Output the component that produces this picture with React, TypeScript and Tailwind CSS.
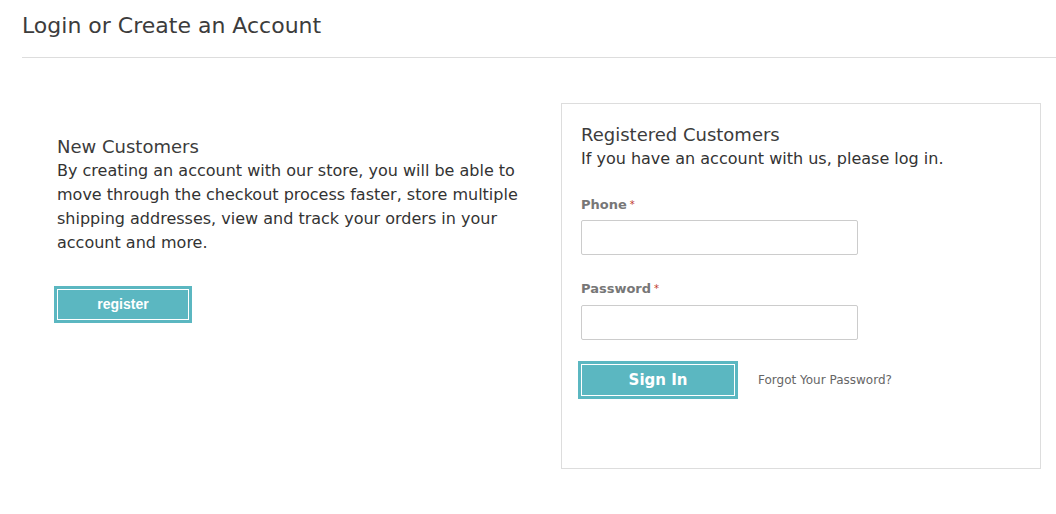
export default function App() {
  return (
    <div className="min-h-[514px] bg-white text-[#333] font-['DejaVu_Sans',sans-serif]">
      <div className="pl-[22px]">
        <h1 className="pt-[12px] pb-[17px] text-[22px] leading-[28px] text-[#3c3c3c] border-b border-[#ddd]">
          Login or Create an Account
        </h1>
      </div>

      <div className="flex pl-[57px] pt-[45px]">
        {/* New Customers */}
        <div className="w-[465px] pt-[32px]">
          <h2 className="text-[18px] leading-[24px] text-[#3c3c3c]">New Customers</h2>
          <p className="text-[16px] leading-[24px] text-[#333]">
            By creating an account with our store, you will be able to move through the checkout
            process faster, store multiple shipping addresses, view and track your orders in your
            account and more.
          </p>
          <button className="mt-[31px] -ml-[3px] w-[138px] h-[37px] bg-[#5bb7c1] border-[3px] border-[#5bb7c1] shadow-[inset_0_0_0_1px_#fff] text-white text-[14px] font-bold font-['Liberation_Sans',sans-serif]">
            register
          </button>
        </div>

        {/* Registered Customers */}
        <div className="ml-[39px] w-[480px] h-[366px] border border-[#ddd] pl-[19px] pt-[19px]">
          <h2 className="text-[18px] leading-[24px] text-[#3c3c3c]">Registered Customers</h2>
          <p className="text-[16px] leading-[24px] text-[#333]">
            If you have an account with us, please log in.
          </p>

          <div className="mt-[25px]">
            <label className="block text-[13px] leading-[18px] font-bold text-[#777]">
              Phone<span className="text-[#c0392b] font-normal text-[10px] align-top ml-[3px]">*</span>
            </label>
            <input className="mt-[6px] block w-[277px] h-[35px] border border-[#ccc] rounded-[2px]" />
          </div>

          <div className="mt-[25px]">
            <label className="block text-[13px] leading-[18px] font-bold text-[#777]">
              Password<span className="text-[#c0392b] font-normal text-[10px] align-top ml-[3px]">*</span>
            </label>
            <input
              type="password"
              className="mt-[7px] block w-[277px] h-[35px] border border-[#ccc] rounded-[2px]"
            />
          </div>

          <div className="mt-[21px] -ml-[3px] flex items-center">
            <button className="w-[160px] h-[38px] bg-[#5bb7c1] border-[3px] border-[#5bb7c1] shadow-[inset_0_0_0_1px_#fff] text-white text-[15px] font-bold">
              Sign In
            </button>
            <a className="ml-[20px] text-[12px] text-[#666]">Forgot Your Password?</a>
          </div>
        </div>
      </div>
    </div>
  );
}
